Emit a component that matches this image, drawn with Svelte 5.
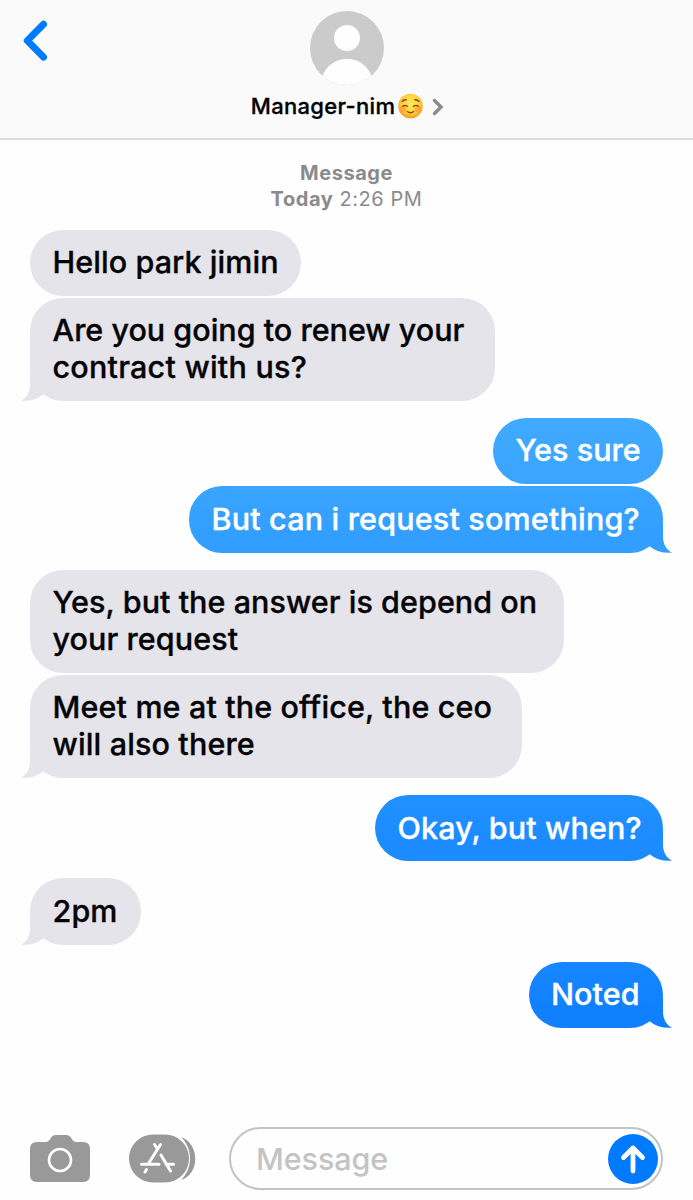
<script>
  // each line is [text, letter spacing]
  const messages = [
    { lines: [["Hello park jimin", 0.07]], width: 271 },
    { lines: [["Are you going to renew your", 0.01], ["contract with us?", 0.23]], width: 465, tail: true },
    { lines: [["Yes sure", 0.04]], width: 170, sent: true, shade: "early" },
    { lines: [["But can i request something?", 0.18]], width: 474, sent: true, tail: true, shade: "mid" },
    { lines: [["Yes, but the answer is depend on", 0.05], ["your request", 0.08]], width: 533.5 },
    { lines: [["Meet me at the office, the ceo", 0.14], ["will also there", 0.14]], width: 492, tail: true },
    { lines: [["Okay, but when?", 0.12]], width: 288, sent: true, tail: true, shade: "late" },
    { lines: [["2pm", 0.1]], width: 110.5, tail: true },
    { lines: [["Noted", 0.05]], width: 134.5, sent: true, tail: true, shade: "last" }
  ];

  const endsGroup = i => messages[i + 1] && !!messages[i + 1].sent !== !!messages[i].sent;
</script>

<style>
  :global(body) {
    background: #fefefe;
  }

  .phone {
    color: #000;
    display: flex;
    flex-direction: column;
    font-family: Inter, "Liberation Sans", sans-serif;
    height: 1200px;
    overflow: hidden;
    width: 693px;
  }

  header {
    background: #fafafa;
    border-bottom: 2px solid #dadadc;
    box-sizing: border-box;
    display: grid;
    flex: none;
    grid-template-columns: 1fr auto 1fr;
    height: 140px;
  }

  svg {
    display: block;
    flex: none;
  }

  .back {
    margin: 18px 0 0 20px;
  }

  .contact {
    align-items: center;
    display: flex;
    flex-direction: column;
    padding-top: 11px;
  }

  .name {
    -webkit-text-stroke: 0.3px currentColor;
    align-items: center;
    display: flex;
    font-size: 22px;
    font-weight: 500;
    height: 28px;
    letter-spacing: 0.32px;
    margin: 6px 0 0 2px;
    white-space: nowrap;
  }

  .emoji {
    margin-left: 3px;
  }

  .chevron {
    margin-left: 9px;
    margin-top: 2px;
  }

  .stamp {
    box-sizing: border-box;
    color: #8a8a8d;
    flex: none;
    font-size: 20px;
    height: 89.5px;
    letter-spacing: 0.55px;
    line-height: 26px;
    padding-top: 20px;
    text-align: center;
  }

  .stamp b {
    font-weight: 700;
  }

  .thread {
    display: flex;
    flex: 1;
    flex-direction: column;
    padding: 0 30px;
  }

  .bubble {
    -webkit-text-stroke: 0.35px currentColor;
    align-self: flex-start;
    background: #e5e4ea;
    border-radius: 33px;
    box-sizing: border-box;
    color: #050507;
    font-size: 30.5px;
    font-weight: 500;
    line-height: 37px;
    margin-bottom: 2px;
    padding: 13.4px 0 15.9px 22.5px;
    position: relative;
    white-space: nowrap;
  }

  .bubble.last-in-group {
    margin-bottom: 17px;
  }

  .line {
    display: block;
  }

  .sent {
    align-self: flex-end;
    color: #fff;
  }

  .early {
    background: linear-gradient(#40aaff, #3aa4ff);
  }

  .mid {
    background: linear-gradient(#3aa5ff, #329eff 70%);
    --tail: #329eff;
  }

  .late {
    background: linear-gradient(#2190ff, #1c8bff 70%);
    --tail: #1c8bff;
  }

  .last {
    background: linear-gradient(#1786ff, #1080ff 70%);
    --tail: #1080ff;
  }

  .hook {
    bottom: 0;
    fill: #e5e4ea;
    left: -9px;
    position: absolute;
    transform: scaleX(-1);
  }

  .sent .hook {
    fill: var(--tail);
    left: auto;
    right: -9px;
    transform: none;
  }

  footer {
    align-items: center;
    display: flex;
    flex: none;
    height: 63px;
    margin-bottom: 10px;
    padding: 0 30px;
  }

  .apps {
    margin-left: 39px;
  }

  .field {
    align-items: center;
    border: 2px solid #c3c3c5;
    border-radius: 32px;
    box-sizing: border-box;
    color: #c3c3c5;
    display: flex;
    font-size: 30.5px;
    font-weight: 500;
    height: 63px;
    justify-content: space-between;
    letter-spacing: -0.1px;
    margin-left: 33px;
    padding: 0 3px 0 25px;
    width: 434px;
  }
</style>

<div class="phone">
  <header>
    <svg class="back" width="32" height="46" viewBox="0 0 32 46">
      <path d="M23.5 6.3 7.3 22.6l16.2 16.5" fill="none" stroke="#007aff" stroke-width="7" stroke-linecap="round" stroke-linejoin="round" />
    </svg>
    <div class="contact">
      <svg width="74" height="75" viewBox="0 0 74 75">
        <clipPath id="disc"><circle cx="37" cy="37" r="37" /></clipPath>
        <g clip-path="url(#disc)">
          <rect width="74" height="75" fill="#cbcbcc" />
          <circle cx="37" cy="27" r="13" fill="#fefefe" />
          <circle cx="37" cy="74" r="26.3" fill="#fefefe" />
        </g>
      </svg>
      <div class="name">
        <span>Manager-nim</span>
        <svg class="emoji" width="25" height="26" viewBox="0 0 25 26">
          <defs>
            <radialGradient id="skin" cx="50%" cy="42%" r="58%">
              <stop offset="0" stop-color="#ffe75c" />
              <stop offset=".65" stop-color="#ffd23c" />
              <stop offset="1" stop-color="#f5961f" />
            </radialGradient>
          </defs>
          <circle cx="12.5" cy="13" r="12.3" fill="url(#skin)" />
          <circle cx="5" cy="16" r="3.4" fill="#ff8b35" opacity=".55" />
          <circle cx="20" cy="16" r="3.4" fill="#ff8b35" opacity=".55" />
          <path d="M4 8.6Q5.5 6.5 8.3 6.8M16.7 6.8q2.8-.3 4.3 1.8M4.6 13.2q2.3-1.700 5 .1M15.4 13.3q2.7-1.800 5-.1M9.3 18.6q3.2 2.500 6.4 0" fill="none" stroke="#7a4718" stroke-width="1.3" stroke-linecap="round" />
        </svg>
        <svg class="chevron" width="12" height="18" viewBox="0 0 12 18">
          <path d="M2.5 2.5 9 9l-6.5 6.5" fill="none" stroke="#8a8a8d" stroke-width="3.4" stroke-linecap="round" />
        </svg>
      </div>
    </div>
  </header>

  <div class="stamp">
    <b>Message</b><br />
    <b>Today</b> 2:26 PM
  </div>

  <main class="thread">
    {#each messages as { lines, width, sent, tail, shade }, i}
      <div
        class="bubble {shade || ''}"
        class:sent
        class:last-in-group={endsGroup(i)}
        style="width: {width}px">
        {#each lines as [text, spacing]}
          <span class="line" style="letter-spacing: {spacing}px">{text}</span>
        {/each}
        {#if tail}
          <svg class="hook" width="42" height="33" viewBox="0 0 42 33">
            <path d="M33 2V17C33 24 36.500 30 42 32.700Q28 33.500 20 26.500V18Z" />
          </svg>
        {/if}
      </div>
    {/each}
  </main>

  <footer>
    <svg width="60" height="48" viewBox="0 0 60 48">
      <path d="M7 7h9q2 0 3.5-2l2-3q1.5-2 4-2h11q2.5 0 4 2l2 3Q44 7 46 7h7q7 0 7 7v26q0 7-7 7H7q-7 0-7-7V14q0-7 7-7Z" fill="#999" />
      <circle cx="30" cy="25" r="11" fill="none" stroke="#fefefe" stroke-width="2.6" />
    </svg>
    <svg class="apps" width="67" height="49" viewBox="0 0 67 49">
      <path d="M24 .5h12a24 24 0 0 1 0 48H24a24 24 0 0 1 0-48ZM52 3c19 7 19 37 0 43 12-12 12-31 0-43Z" fill="#999" />
      <path d="M25.5 10.5 28.5 15M31.5 10.500 19.5 29.5M32 21l9.500 16M12.500 30.200H30M37 30.200h7.500M17.500 35.500 16 38" fill="none" stroke="#fefefe" stroke-width="3" stroke-linecap="round" />
    </svg>
    <div class="field">
      <span>Message</span>
      <svg width="50" height="50" viewBox="0 0 50 50">
        <circle cx="25" cy="25" r="25" fill="#007aff" />
        <path d="M25 37V14M15.5 23.5 25 14l9.5 9.5" fill="none" stroke="#fff" stroke-width="4.8" stroke-linecap="round" stroke-linejoin="round" />
      </svg>
    </div>
  </footer>
</div>
